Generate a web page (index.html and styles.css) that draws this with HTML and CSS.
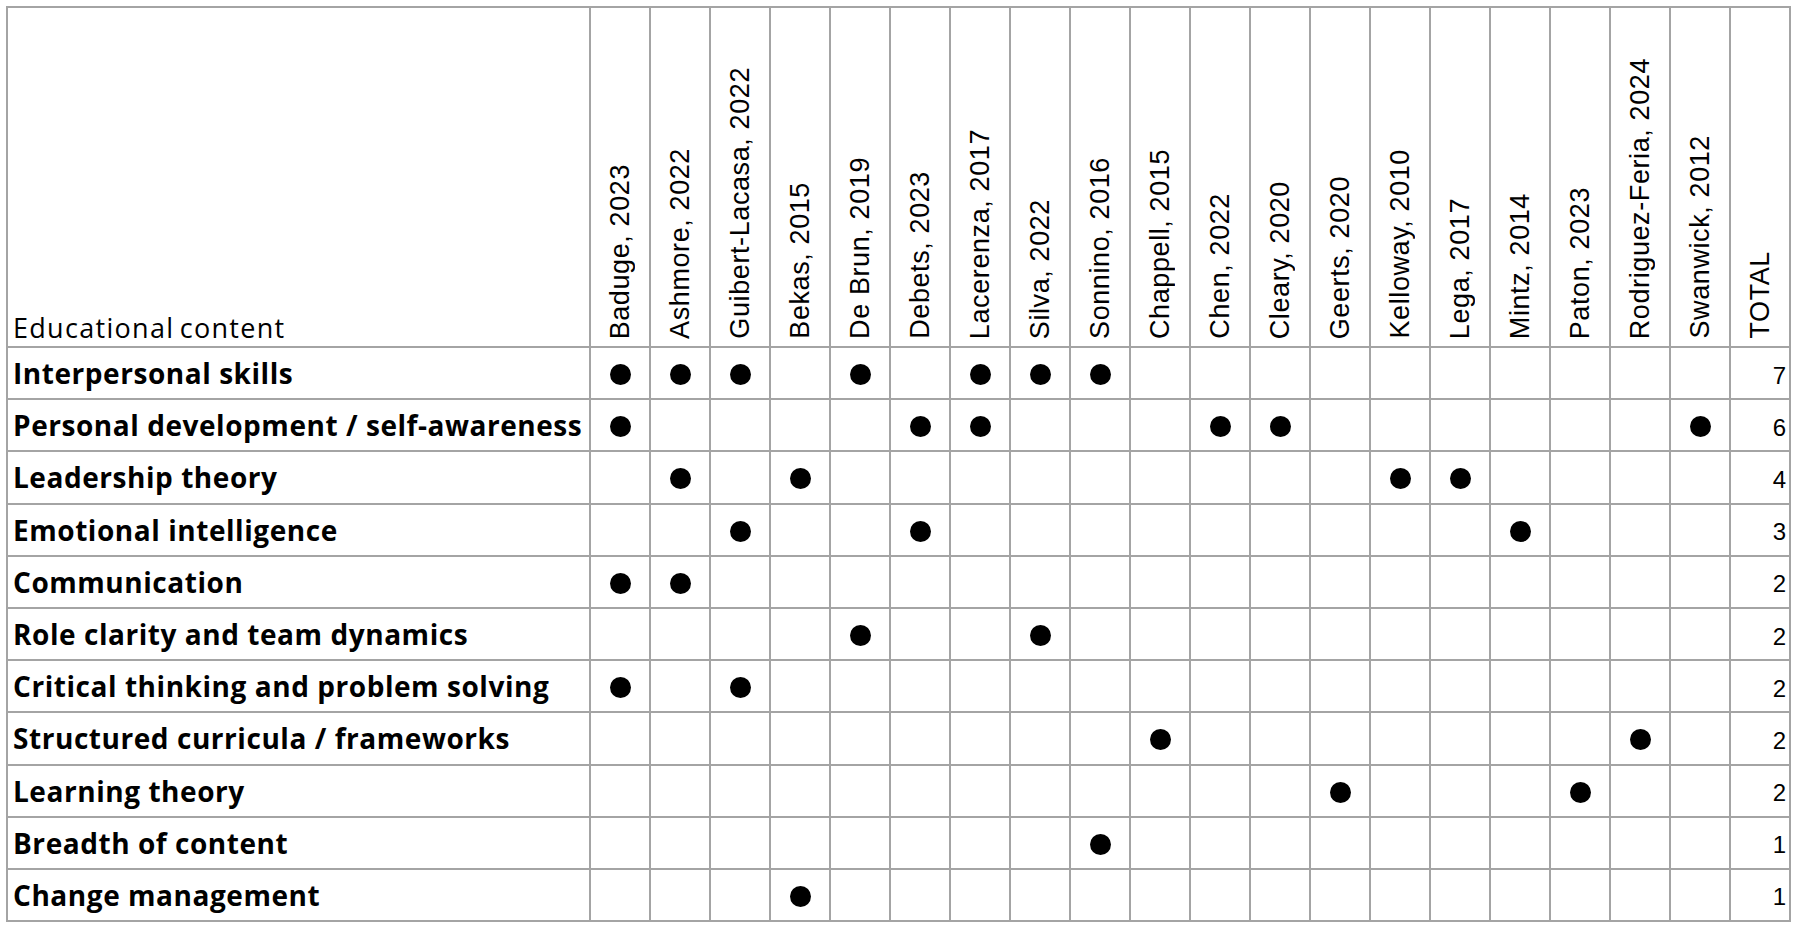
FILE: index.html
```html
<!DOCTYPE html>
<html lang="en">
<head>
<meta charset="utf-8">
<title>Educational content</title>
<link rel="stylesheet" href="styles.css">
</head>
<body>
<div class="grid">
  <div class="c corner">Educational content</div>
  <div class="c head"><span class="rot">Baduge, 2023</span></div>
  <div class="c head"><span class="rot">Ashmore, 2022</span></div>
  <div class="c head"><span class="rot">Guibert-Lacasa, 2022</span></div>
  <div class="c head"><span class="rot">Bekas, 2015</span></div>
  <div class="c head"><span class="rot">De Brun, 2019</span></div>
  <div class="c head"><span class="rot">Debets, 2023</span></div>
  <div class="c head"><span class="rot">Lacerenza, 2017</span></div>
  <div class="c head"><span class="rot">Silva, 2022</span></div>
  <div class="c head"><span class="rot">Sonnino, 2016</span></div>
  <div class="c head"><span class="rot">Chappell, 2015</span></div>
  <div class="c head"><span class="rot">Chen, 2022</span></div>
  <div class="c head"><span class="rot">Cleary, 2020</span></div>
  <div class="c head"><span class="rot">Geerts, 2020</span></div>
  <div class="c head"><span class="rot">Kelloway, 2010</span></div>
  <div class="c head"><span class="rot">Lega, 2017</span></div>
  <div class="c head"><span class="rot">Mintz, 2014</span></div>
  <div class="c head"><span class="rot">Paton, 2023</span></div>
  <div class="c head"><span class="rot">Rodriguez-Feria, 2024</span></div>
  <div class="c head"><span class="rot">Swanwick, 2012</span></div>
  <div class="c head"><span class="rot">TOTAL</span></div>

  <div class="c lab">Interpersonal skills</div>
  <div class="c"><span class="dot"></span></div><div class="c"><span class="dot"></span></div><div class="c"><span class="dot"></span></div><div class="c"></div><div class="c"><span class="dot"></span></div><div class="c"></div><div class="c"><span class="dot"></span></div><div class="c"><span class="dot"></span></div><div class="c"><span class="dot"></span></div><div class="c"></div><div class="c"></div><div class="c"></div><div class="c"></div><div class="c"></div><div class="c"></div><div class="c"></div><div class="c"></div><div class="c"></div><div class="c"></div>
  <div class="c tot">7</div>

  <div class="c lab">Personal development / self-awareness</div>
  <div class="c"><span class="dot"></span></div><div class="c"></div><div class="c"></div><div class="c"></div><div class="c"></div><div class="c"><span class="dot"></span></div><div class="c"><span class="dot"></span></div><div class="c"></div><div class="c"></div><div class="c"></div><div class="c"><span class="dot"></span></div><div class="c"><span class="dot"></span></div><div class="c"></div><div class="c"></div><div class="c"></div><div class="c"></div><div class="c"></div><div class="c"></div><div class="c"><span class="dot"></span></div>
  <div class="c tot">6</div>

  <div class="c lab">Leadership theory</div>
  <div class="c"></div><div class="c"><span class="dot"></span></div><div class="c"></div><div class="c"><span class="dot"></span></div><div class="c"></div><div class="c"></div><div class="c"></div><div class="c"></div><div class="c"></div><div class="c"></div><div class="c"></div><div class="c"></div><div class="c"></div><div class="c"><span class="dot"></span></div><div class="c"><span class="dot"></span></div><div class="c"></div><div class="c"></div><div class="c"></div><div class="c"></div>
  <div class="c tot">4</div>

  <div class="c lab">Emotional intelligence</div>
  <div class="c"></div><div class="c"></div><div class="c"><span class="dot"></span></div><div class="c"></div><div class="c"></div><div class="c"><span class="dot"></span></div><div class="c"></div><div class="c"></div><div class="c"></div><div class="c"></div><div class="c"></div><div class="c"></div><div class="c"></div><div class="c"></div><div class="c"></div><div class="c"><span class="dot"></span></div><div class="c"></div><div class="c"></div><div class="c"></div>
  <div class="c tot">3</div>

  <div class="c lab">Communication</div>
  <div class="c"><span class="dot"></span></div><div class="c"><span class="dot"></span></div><div class="c"></div><div class="c"></div><div class="c"></div><div class="c"></div><div class="c"></div><div class="c"></div><div class="c"></div><div class="c"></div><div class="c"></div><div class="c"></div><div class="c"></div><div class="c"></div><div class="c"></div><div class="c"></div><div class="c"></div><div class="c"></div><div class="c"></div>
  <div class="c tot">2</div>

  <div class="c lab">Role clarity and team dynamics</div>
  <div class="c"></div><div class="c"></div><div class="c"></div><div class="c"></div><div class="c"><span class="dot"></span></div><div class="c"></div><div class="c"></div><div class="c"><span class="dot"></span></div><div class="c"></div><div class="c"></div><div class="c"></div><div class="c"></div><div class="c"></div><div class="c"></div><div class="c"></div><div class="c"></div><div class="c"></div><div class="c"></div><div class="c"></div>
  <div class="c tot">2</div>

  <div class="c lab">Critical thinking and problem solving</div>
  <div class="c"><span class="dot"></span></div><div class="c"></div><div class="c"><span class="dot"></span></div><div class="c"></div><div class="c"></div><div class="c"></div><div class="c"></div><div class="c"></div><div class="c"></div><div class="c"></div><div class="c"></div><div class="c"></div><div class="c"></div><div class="c"></div><div class="c"></div><div class="c"></div><div class="c"></div><div class="c"></div><div class="c"></div>
  <div class="c tot">2</div>

  <div class="c lab">Structured curricula / frameworks</div>
  <div class="c"></div><div class="c"></div><div class="c"></div><div class="c"></div><div class="c"></div><div class="c"></div><div class="c"></div><div class="c"></div><div class="c"></div><div class="c"><span class="dot"></span></div><div class="c"></div><div class="c"></div><div class="c"></div><div class="c"></div><div class="c"></div><div class="c"></div><div class="c"></div><div class="c"><span class="dot"></span></div><div class="c"></div>
  <div class="c tot">2</div>

  <div class="c lab">Learning theory</div>
  <div class="c"></div><div class="c"></div><div class="c"></div><div class="c"></div><div class="c"></div><div class="c"></div><div class="c"></div><div class="c"></div><div class="c"></div><div class="c"></div><div class="c"></div><div class="c"></div><div class="c"><span class="dot"></span></div><div class="c"></div><div class="c"></div><div class="c"></div><div class="c"><span class="dot"></span></div><div class="c"></div><div class="c"></div>
  <div class="c tot">2</div>

  <div class="c lab">Breadth of content</div>
  <div class="c"></div><div class="c"></div><div class="c"></div><div class="c"></div><div class="c"></div><div class="c"></div><div class="c"></div><div class="c"></div><div class="c"><span class="dot"></span></div><div class="c"></div><div class="c"></div><div class="c"></div><div class="c"></div><div class="c"></div><div class="c"></div><div class="c"></div><div class="c"></div><div class="c"></div><div class="c"></div>
  <div class="c tot">1</div>

  <div class="c lab">Change management</div>
  <div class="c"></div><div class="c"></div><div class="c"></div><div class="c"><span class="dot"></span></div><div class="c"></div><div class="c"></div><div class="c"></div><div class="c"></div><div class="c"></div><div class="c"></div><div class="c"></div><div class="c"></div><div class="c"></div><div class="c"></div><div class="c"></div><div class="c"></div><div class="c"></div><div class="c"></div><div class="c"></div>
  <div class="c tot">1</div>
</div>
</body>
</html>
```

FILE: styles.css
```css
html, body {
  margin: 0;
  background: #ffffff;
}

body {
  padding: 6px;
  color: #000000;
}

.grid {
  display: grid;
  grid-template-columns: 581px repeat(20, 58px);
  grid-template-rows: 338px repeat(11, 50.2px);
  gap: 2px;
  width: max-content;
  background: #a4a4a4;
  border: 2px solid #a4a4a4;
}

.c {
  background: #ffffff;
  display: flex;
  align-items: center;
  justify-content: center;
  min-width: 0;
}

.corner {
  justify-content: flex-start;
  align-items: flex-end;
  padding: 0 0 5px 5px;
  font: 400 27px/1 "Open Sans", sans-serif;
  letter-spacing: 1.3px;
  word-spacing: -3px;
  white-space: nowrap;
}

.head {
  align-items: flex-end;
  padding-bottom: 7px;
}

.rot {
  writing-mode: vertical-rl;
  transform: rotate(180deg);
  font: 400 27px/1 "Liberation Sans", Arial, sans-serif;
  letter-spacing: 0.6px;
  white-space: nowrap;
}

.lab {
  justify-content: flex-start;
  padding-left: 5px;
  font: 700 28px/1 "Open Sans", sans-serif;
  letter-spacing: 0.55px;
  white-space: nowrap;
}

.tot {
  justify-content: flex-end;
  padding: 5px 3px 0 0;
  font: 400 24px/1 "Liberation Sans", Arial, sans-serif;
}

.dot {
  width: 21px;
  height: 21px;
  margin-top: 3px;
  border-radius: 50%;
  background: #000000;
}
```
